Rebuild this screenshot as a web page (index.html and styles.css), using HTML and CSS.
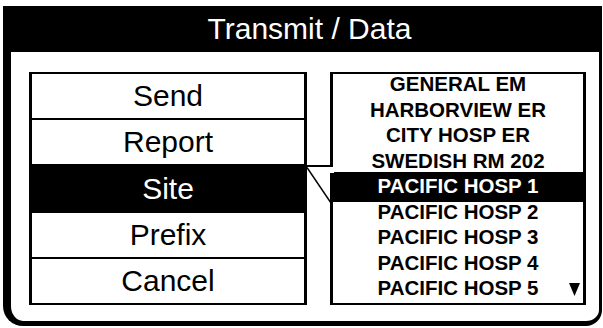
FILE: index.html
```html
<!DOCTYPE html>
<html>
<head>
<meta charset="utf-8">
<link rel="stylesheet" href="styles.css">
</head>
<body>
<div class="frame">
  <div class="title">Transmit / Data</div>
  <div class="content">
    <div class="menu">
      <div class="item">Send</div>
      <div class="item">Report</div>
      <div class="item sel">Site</div>
      <div class="item">Prefix</div>
      <div class="item">Cancel</div>
    </div>
    <div class="list">
      <div class="row first">GENERAL EM</div>
      <div class="row">HARBORVIEW ER</div>
      <div class="row">CITY HOSP ER</div>
      <div class="row">SWEDISH RM 202</div>
      <div class="row sel">PACIFIC HOSP 1</div>
      <div class="row">PACIFIC HOSP 2</div>
      <div class="row">PACIFIC HOSP 3</div>
      <div class="row">PACIFIC HOSP 4</div>
      <div class="row">PACIFIC HOSP 5</div>
      <svg class="arrow" width="11" height="13" viewBox="0 0 11 13"><polygon points="0,0 11,0 5.5,13" fill="#000"/></svg>
    </div>
    <svg class="connector" width="40" height="50" viewBox="0 0 40 50">
      <rect x="30" y="7" width="4" height="6" fill="#fff"/>
      <line x1="6" y1="6" x2="32" y2="6" stroke="#000" stroke-width="2"/>
      <line x1="7" y1="7.5" x2="31" y2="43" stroke="#000" stroke-width="1.4"/>
    </svg>
  </div>
</div>
</body>
</html>
```
FILE: styles.css
```css
html, body {
  margin: 0;
  padding: 0;
  background: #fff;
}
body {
  font-family: "Liberation Sans", Arial, Helvetica, sans-serif;
  color: #000;
}
.frame {
  margin: 6px 0 0 3px;
  width: 599px;
  height: 320px;
  box-sizing: border-box;
  border-left: 8px solid #000;
  border-right: 3px solid #000;
  border-bottom: 5px solid #000;
  border-bottom-left-radius: 20px;
  border-bottom-right-radius: 16px;
  display: flex;
  flex-direction: column;
}
.title {
  height: 46px;
  background: #000;
  color: #fff;
  font-size: 30px;
  display: flex;
  align-items: center;
  justify-content: center;
  padding-left: 6px;
  margin-right: -3px;
}
.content {
  position: relative;
  display: flex;
  padding: 20px 0 0 18px;
}
.menu {
  width: 278px;
  height: 233px;
  box-sizing: border-box;
  border-style: solid;
  border-color: #000;
  border-width: 2px 3px;
  display: flex;
  flex-direction: column;
}
.item {
  flex: 1;
  display: flex;
  align-items: center;
  justify-content: center;
  font-size: 30px;
  line-height: 1;
  border-top: 2px solid #000;
}
.item:first-child {
  border-top: none;
}
.item.sel {
  background: #000;
  color: #fff;
}
.list {
  position: relative;
  margin-left: 23px;
  width: 256px;
  height: 233px;
  box-sizing: border-box;
  border-style: solid;
  border-color: #000;
  border-width: 2px 3px;
}
.row {
  height: 25.5px;
  line-height: 25.5px;
  font-size: 20.5px;
  font-weight: bold;
  text-align: center;
  white-space: nowrap;
}
.row.first {
  margin-top: -3px;
}
.row.sel {
  background: #000;
  color: #fff;
  box-shadow: 0 -1px 0 #000, 0 3px 0 #000;
}
.arrow {
  position: absolute;
  right: 3px;
  bottom: 7px;
}
.connector {
  position: absolute;
  left: 289px;
  top: 108px;
}
```
